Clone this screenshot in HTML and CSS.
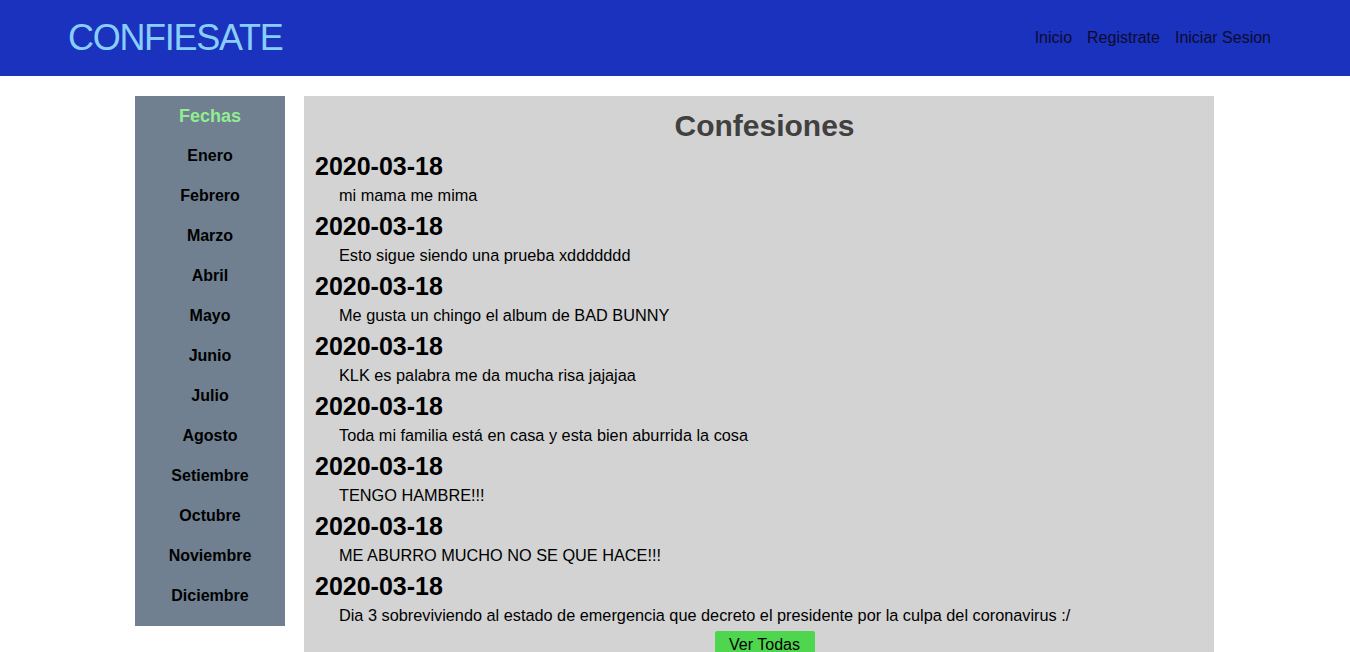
FILE: index.html
```html
<!DOCTYPE html>
<html lang="es">
<head>
<meta charset="utf-8">
<title>Confiesate</title>
<link rel="stylesheet" href="styles.css">
</head>
<body>
<header class="topbar">
  <div class="logo">CONFIESATE</div>
  <nav class="nav">
    <a href="#">Inicio</a>
    <a href="#">Registrate</a>
    <a href="#">Iniciar Sesion</a>
  </nav>
</header>
<div class="layout">
  <aside class="sidebar">
    <div class="side-title">Fechas</div>
    <a class="month" href="#">Enero</a>
    <a class="month" href="#">Febrero</a>
    <a class="month" href="#">Marzo</a>
    <a class="month" href="#">Abril</a>
    <a class="month" href="#">Mayo</a>
    <a class="month" href="#">Junio</a>
    <a class="month" href="#">Julio</a>
    <a class="month" href="#">Agosto</a>
    <a class="month" href="#">Setiembre</a>
    <a class="month" href="#">Octubre</a>
    <a class="month" href="#">Noviembre</a>
    <a class="month" href="#">Diciembre</a>
  </aside>
  <main class="main">
    <h1 class="title">Confesiones</h1>
    <div class="entry"><h2 class="date">2020-03-18</h2><p class="text">mi mama me mima</p></div>
    <div class="entry"><h2 class="date">2020-03-18</h2><p class="text">Esto sigue siendo una prueba xddddddd</p></div>
    <div class="entry"><h2 class="date">2020-03-18</h2><p class="text">Me gusta un chingo el album de BAD BUNNY</p></div>
    <div class="entry"><h2 class="date">2020-03-18</h2><p class="text">KLK es palabra me da mucha risa jajajaa</p></div>
    <div class="entry"><h2 class="date">2020-03-18</h2><p class="text">Toda mi familia está en casa y esta bien aburrida la cosa</p></div>
    <div class="entry"><h2 class="date">2020-03-18</h2><p class="text">TENGO HAMBRE!!!</p></div>
    <div class="entry"><h2 class="date">2020-03-18</h2><p class="text">ME ABURRO MUCHO NO SE QUE HACE!!!</p></div>
    <div class="entry"><h2 class="date">2020-03-18</h2><p class="text">Dia 3 sobreviviendo al estado de emergencia que decreto el presidente por la culpa del coronavirus :/</p></div>
    <div class="actions"><a class="btn" href="#">Ver Todas</a></div>
  </main>
</div>
</body>
</html>
```
FILE: styles.css
```css
html, body {
  margin: 0;
  padding: 0;
  background: #ffffff;
  font-family: "Liberation Sans", Arial, sans-serif;
  overflow: hidden;
}
a { text-decoration: none; color: inherit; }

.topbar {
  height: 76px;
  background: #1a32bd;
  display: flex;
  align-items: center;
  justify-content: space-between;
  padding: 0 79px 0 68px;
}
.logo {
  font-size: 36px;
  color: #87cefa;
  line-height: 76px;
  letter-spacing: -1.3px;
}
.nav {
  display: flex;
  gap: 15px;
  font-size: 16px;
  color: #0c0c2c;
}

.layout {
  margin: 20px 136px 0 135px;
  display: flex;
  align-items: flex-start;
  gap: 19px;
}

.sidebar {
  width: 150px;
  flex: none;
  background: #708090;
  display: flex;
  flex-direction: column;
  align-items: center;
  padding-bottom: 10px;
}
.side-title {
  color: #90ee90;
  font-weight: bold;
  font-size: 18px;
  line-height: 40px;
}
.month {
  color: #000;
  font-weight: bold;
  font-size: 16px;
  line-height: 40px;
}

.main {
  flex: 1;
  background: #d3d3d3;
  padding: 10px 0 0 11px;
  min-height: 600px;
}
.title {
  margin: 0 0 6px;
  font-size: 30px;
  line-height: 40px;
  text-align: center;
  color: #404040;
}
.entry { height: 60px; }
.date {
  margin: 0;
  font-size: 25px;
  line-height: 28px;
  color: #000;
}
.text {
  margin: 0;
  padding-left: 24px;
  font-size: 16.3px;
  line-height: 31px;
  color: #000;
}
.actions {
  display: flex;
  justify-content: center;
  margin-top: -1px;
}
.btn {
  display: block;
  width: 100px;
  height: 26px;
  background: #4fd64f;
  color: #000;
  font-size: 16px;
  line-height: 28px;
  text-align: center;
  border-radius: 2px 2px 0 0;
}
```
